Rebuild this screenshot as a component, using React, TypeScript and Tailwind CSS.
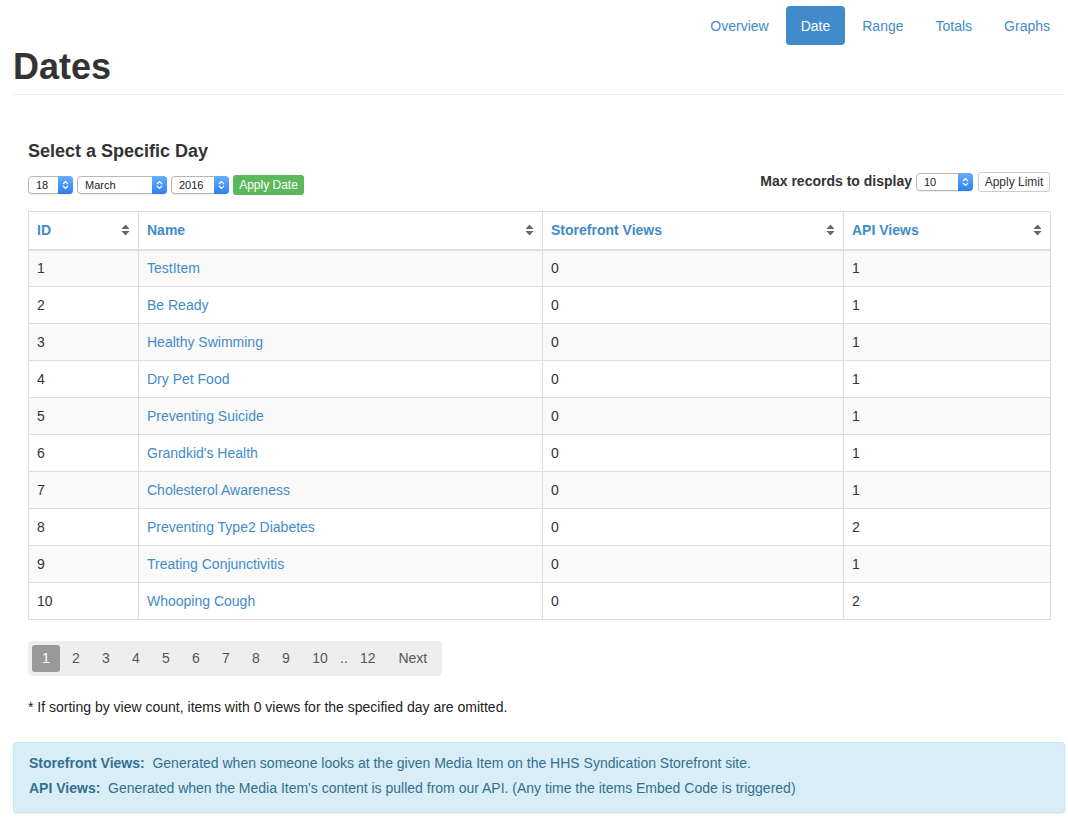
import React from "react";

const rows = [
	{id: 1, name: "TestItem", sf: 0, api: 1},
	{id: 2, name: "Be Ready", sf: 0, api: 1},
	{id: 3, name: "Healthy Swimming", sf: 0, api: 1},
	{id: 4, name: "Dry Pet Food", sf: 0, api: 1},
	{id: 5, name: "Preventing Suicide", sf: 0, api: 1},
	{id: 6, name: "Grandkid's Health", sf: 0, api: 1},
	{id: 7, name: "Cholesterol Awareness", sf: 0, api: 1},
	{id: 8, name: "Preventing Type2 Diabetes", sf: 0, api: 2},
	{id: 9, name: "Treating Conjunctivitis", sf: 0, api: 1},
	{id: 10, name: "Whooping Cough", sf: 0, api: 2},
];

const SortIcon = () => (
	<svg width="9" height="12" viewBox="0 0 9 12" className="shrink-0">
		<path d="M4.5 0.5 L8.5 5 L0.5 5 Z" fill="#666" />
		<path d="M0.5 7 L8.5 7 L4.5 11.5 Z" fill="#666" />
	</svg>
);

const Select = ({label, w}: {label: string; w: string}) => (
	<div className={`flex h-[18px] ${w} items-center rounded-[4px] border border-[#b8b8b8] bg-white shadow-[0_1px_1px_rgba(0,0,0,0.08)]`}>
		<span className="flex-1 pl-[7px] text-[11px] leading-none text-[#222]">{label}</span>
		<span className="flex h-[18px] w-[15px] -mr-px -my-px items-center justify-center rounded-r-[4px] bg-gradient-to-b from-[#67aef9] to-[#2a80f1]">
			<svg width="7" height="10" viewBox="0 0 7 10">
				<path d="M1 4 L3.5 1.5 L6 4 M1 6 L3.5 8.5 L6 6" stroke="white" strokeWidth="1.2" fill="none" />
			</svg>
		</span>
	</div>
);

const navItems = ["Overview", "Date", "Range", "Totals", "Graphs"];

export default function App() {
	return (
		<div className="min-h-[819px] bg-white font-['Liberation_Sans',Arial,sans-serif] text-[#333]">
			<div className="ml-[13px] w-[1052px]">
				<nav className="flex justify-end gap-[2px] pt-[6px]">
					{navItems.map((item) => (
						<a
							key={item}
							className={
								item === "Date"
									? "flex h-[39px] items-center rounded-[4px] bg-[#428bca] px-[15px] pt-[2px] text-[14px] text-white"
									: "flex h-[39px] items-center px-[15px] pt-[2px] text-[14px] text-[#428bca]"
							}
						>
							{item}
						</a>
					))}
				</nav>
				<h1 className="border-b border-[#eee] pb-[5px] text-[36px] font-bold leading-[44px] text-[#333]">Dates</h1>

				<div className="px-[15px]">
					<h4 className="mt-[45px] text-[18px] font-bold leading-[22px] text-[#333]">Select a Specific Day</h4>

					<div className="mt-[9px] flex items-start justify-between">
						<div className="mt-[4px] flex items-center gap-[4px]">
							<Select label="18" w="w-[45px]" />
							<Select label="March" w="w-[90px]" />
							<Select label="2016" w="w-[58px]" />
							<button className="flex h-[20px] w-[71px] items-center justify-center rounded-[3px] bg-[#5cb85c] text-[12px] text-white">
								Apply Date
							</button>
						</div>
						<div className="flex items-center">
							<span className="mr-[4px] text-[14px] font-bold text-[#333]">Max records to display</span>
							<div className="mt-[1px]">
								<Select label="10" w="w-[57px]" />
							</div>
							<button className="ml-[5px] flex h-[20px] w-[72px] items-center justify-center rounded-[3px] border border-[#ccc] bg-white text-[12px] text-[#333]">
								Apply Limit
							</button>
						</div>
					</div>

					<table className="mt-[16px] w-[1022px] table-fixed border-collapse text-[14px]">
						<colgroup>
							<col className="w-[110px]" />
							<col className="w-[404px]" />
							<col className="w-[301px]" />
							<col className="w-[207px]" />
						</colgroup>
						<thead>
							<tr className="h-[38px] border border-b-2 border-[#ddd]">
								{["ID", "Name", "Storefront Views", "API Views"].map((h) => (
									<th key={h} className="border border-b-2 border-[#ddd] px-[8px] text-left font-bold text-[#428bca]">
										<div className="flex items-center justify-between">
											<span>{h}</span>
											<SortIcon />
										</div>
									</th>
								))}
							</tr>
						</thead>
						<tbody>
							{rows.map((r, i) => (
								<tr key={r.id} className={`h-[37px] ${i % 2 === 0 ? "bg-[#f9f9f9]" : "bg-white"}`}>
									<td className="border border-[#ddd] px-[8px] text-[#333]">{r.id}</td>
									<td className="border border-[#ddd] px-[8px] text-[#428bca]">{r.name}</td>
									<td className="border border-[#ddd] px-[8px] text-[#333]">{r.sf}</td>
									<td className="border border-[#ddd] px-[8px] text-[#333]">{r.api}</td>
								</tr>
							))}
						</tbody>
					</table>

					<div className="mt-[21px] inline-flex h-[35px] items-center gap-[2px] rounded-[4px] bg-[#eee] px-[4px] text-[14px] text-[#555]">
						<span className="flex h-[27px] w-[28px] items-center justify-center rounded-[3px] bg-[#999] text-white">1</span>
						{["2", "3", "4", "5", "6", "7", "8", "9"].map((p) => (
							<span key={p} className="flex h-[27px] w-[28px] items-center justify-center">{p}</span>
						))}
						<span className="flex h-[27px] w-[36px] items-center justify-center">10</span>
						<span className="flex h-[27px] items-center">..</span>
						<span className="flex h-[27px] w-[36px] items-center justify-center">12</span>
						<span className="flex h-[27px] w-[50px] items-center justify-center">Next</span>
					</div>

					<p className="mt-[21px] text-[14px] leading-[20px] text-[#222]">
						* If sorting by view count, items with 0 views for the specified day are omitted.
					</p>
				</div>

				<div className="mt-[25px] rounded-[4px] border border-[#bce8f1] bg-[#d9edf7] px-[15px] pb-[11px] pt-[8px] text-[14px] leading-[25px] text-[#31708f] shadow-[0_1px_2px_rgba(0,0,0,0.08)]">
					<div>
						<b>Storefront Views:</b>&nbsp; Generated when someone looks at the given Media Item on the HHS Syndication Storefront site.
					</div>
					<div>
						<b>API Views:</b>&nbsp; Generated when the Media Item's content is pulled from our API. (Any time the items Embed Code is triggered)
					</div>
				</div>
			</div>
		</div>
	);
}
